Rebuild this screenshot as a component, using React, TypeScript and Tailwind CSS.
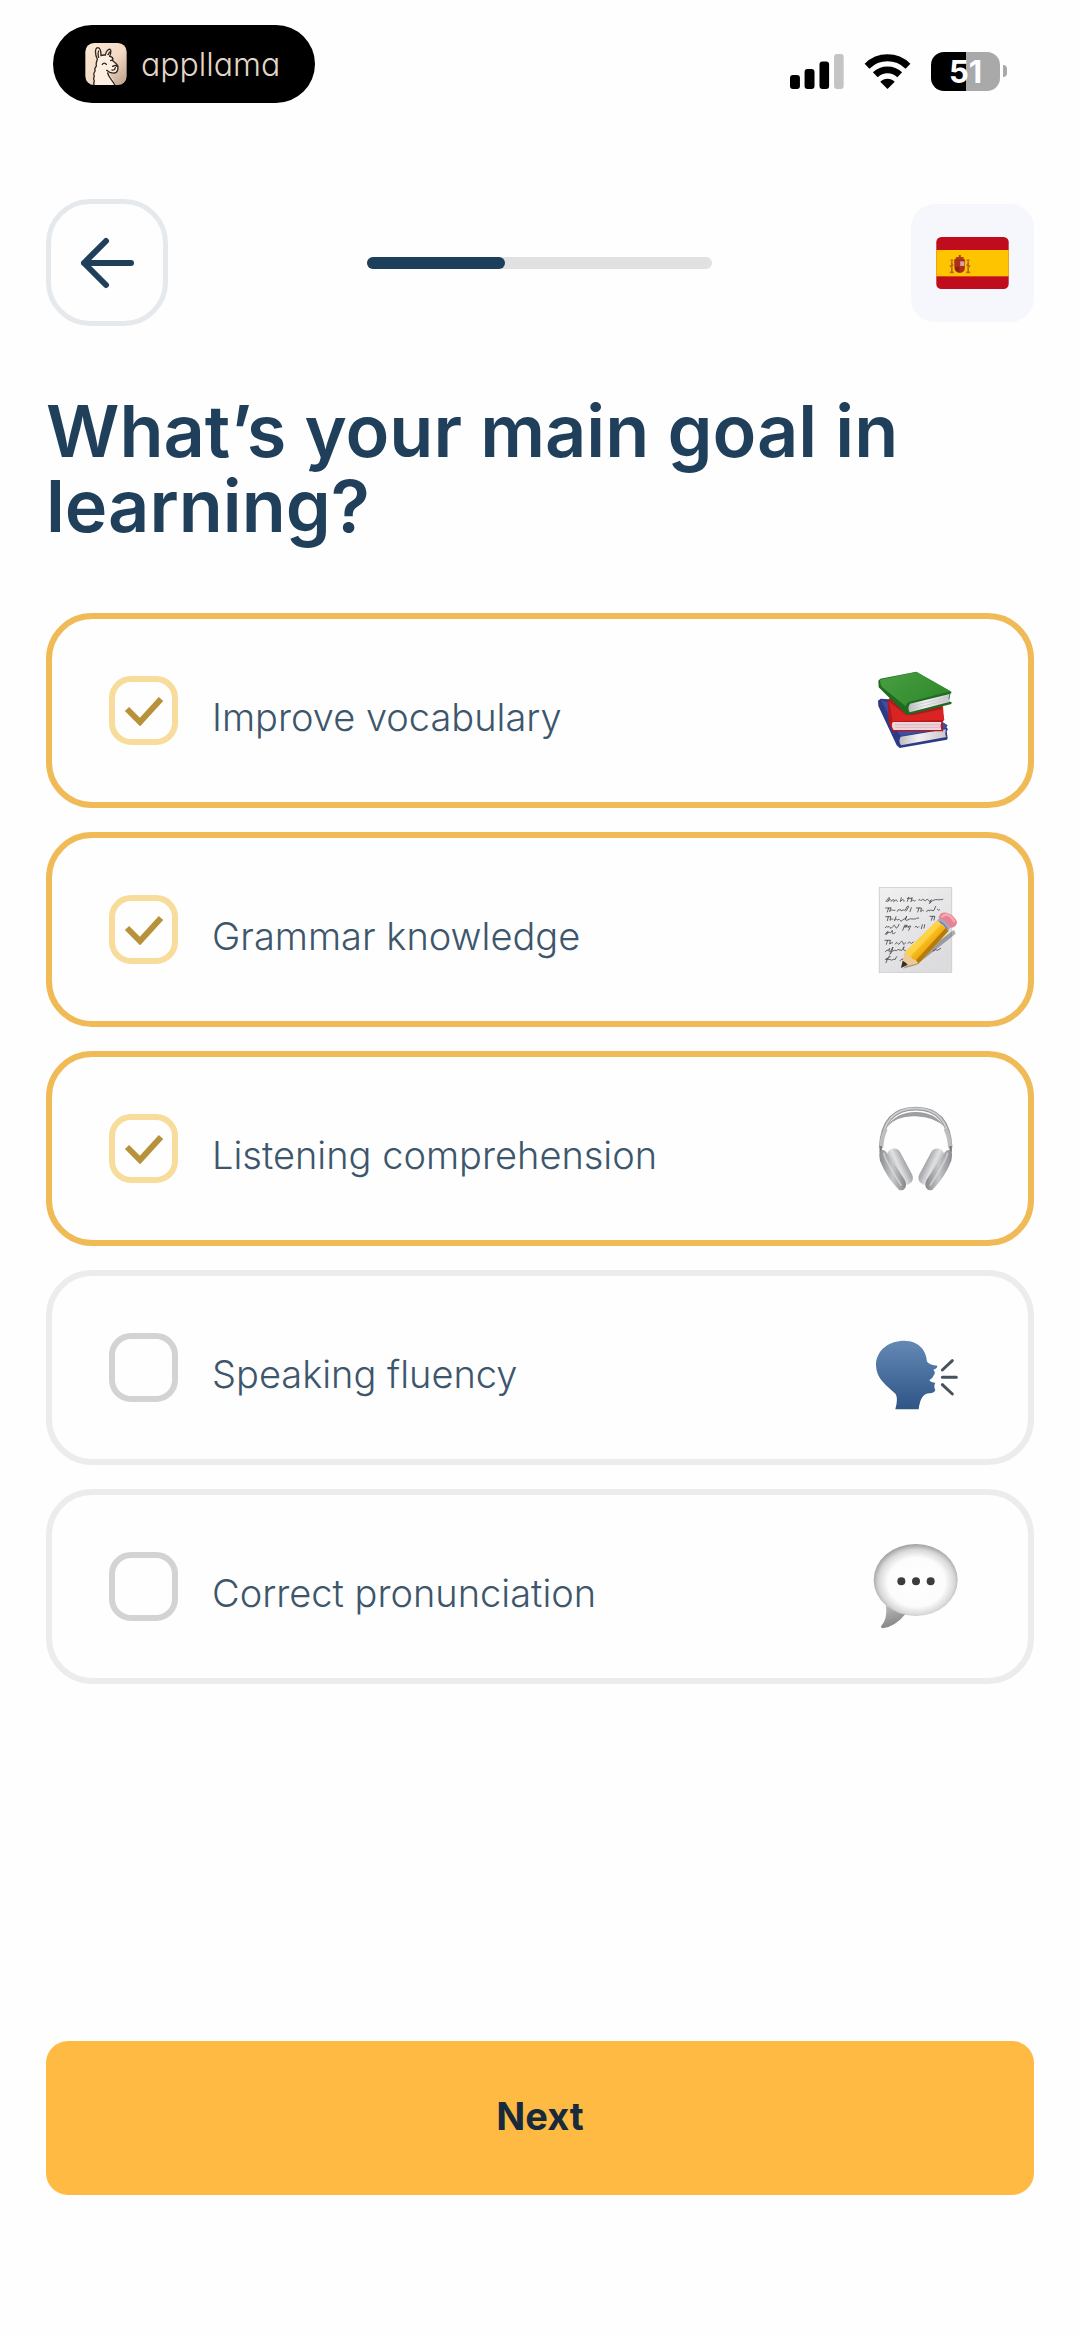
import { useState } from "react";
import type { ReactNode } from "react";

function LlamaIcon() {
  return (
    <svg viewBox="137 96 124 126" className="size-[42px] shrink-0" aria-hidden="true">
      <defs>
        <linearGradient id="llamaBg" x1="0" y1="0" x2="1" y2="1">
          <stop offset="0" stopColor="#fbe9d8" />
          <stop offset="0.55" stopColor="#f3d9c3" />
          <stop offset="1" stopColor="#b99e8a" />
        </linearGradient>
      </defs>
      <rect x="137" y="96" width="124" height="126" rx="26" fill="url(#llamaBg)" />
      <path
        d="M163 222c-3-6 3-8 0-14c-4-6 3-9 0-15c-3-7 5-9 3-15c-3-7 6-9 4-15c-2-8 3-13 3-18c-7-12-8-32 1-34c10 0 10 14 10 24c5-3 9-2 13-2c2-10 9-19 14-17c5 4 1 16-1 21c8 1 11 6 8 12c6 6 17 12 17 20c0 9-2 17-10 18c-7 1-12-1-17-5c2 14 18 25 17 40z"
        fill="#fdf0e3"
      />
      <path
        d="M163 221c-3-6 3-8 0-14c-4-6 3-9 0-15c-3-7 5-9 3-15c-3-7 6-9 4-15c-2-8 3-13 3-18c-7-12-8-32 1-34c10 0 10 14 10 24c5-3 9-2 13-2c2-10 9-19 14-17c5 4 1 16-1 21c8 1 11 6 8 12c6 6 17 12 17 20c0 9-2 17-10 18c-9 1-18-2-24-8M204 186c3 14 15 22 21 35M177 139c-2-8-2-16 0-19M205 131l5-8M188 160c3-5 9-5 12 0M219 166c5-3 11-3 14 1M227 170c-1 6-5 8-10 7M213 149c3-1 6-3 7-6"
        fill="none"
        stroke="#33241c"
        strokeWidth="4"
        strokeLinecap="round"
        strokeLinejoin="round"
      />
    </svg>
  );
}

function SignalIcon() {
  return (
    <svg viewBox="58 72 163 105" className="h-[35px] w-[54px]" aria-label="Signal">
      <rect x="58" y="135" width="30" height="42" rx="9" />
      <rect x="102" y="117" width="30" height="60" rx="9" />
      <rect x="147" y="94" width="29" height="83" rx="9" />
      <rect x="191" y="72" width="29" height="105" rx="9" fill="#c4c4c4" />
    </svg>
  );
}

function WifiIcon() {
  return (
    <svg viewBox="280 71 142 106" className="h-[35px] w-[47px]" aria-label="Wi-Fi">
      <path d="M351 177l-22-22c12-12 32-12 44 0z" />
      <path d="M289 108c35-34 89-34 124 0M314 134c21-20 53-20 74 0" fill="none" stroke="#000" strokeWidth="21" />
    </svg>
  );
}

function SpainFlag() {
  return (
    <svg viewBox="166 168 218 156" className="h-[52px] w-[73px]" aria-hidden="true">
      <defs>
        <clipPath id="flagClip">
          <rect x="166" y="168" width="218" height="156" rx="16" />
        </clipPath>
      </defs>
      <g clipPath="url(#flagClip)">
        <rect x="166" y="168" width="218" height="156" fill="#c00d1e" />
        <rect x="166" y="207" width="218" height="79" fill="#ffc400" />
      </g>
      <path d="M220 236q16-16 33 0l-1 26q-1 13-15 14q-15-1-16-14z" fill="#ad2f16" />
      <path d="M238 241h13v14h-13z" fill="#d9a0a0" />
      <path d="M223 257h13v15q-11-1-13-9z" fill="#8d1f1a" />
      <path d="M225 228h24l-3 6h-18zM234 222h6v7h-6z" fill="#a8401a" />
      <path
        d="M213 242v30M262 242v30M207 274h12M256 274h12M207 256l11-5M268 256l-11-5M209 238h8M258 238h8"
        stroke="#b56a1c"
        strokeWidth="5"
        fill="none"
      />
    </svg>
  );
}

function BooksIcon() {
  return (
    <svg viewBox="69 82 258 258" className="size-[86px]" aria-hidden="true">
      <defs>
        <linearGradient id="bookGreen" x1="0" y1="0" x2="1" y2="0.6">
          <stop offset="0" stopColor="#4a9e43" />
          <stop offset="1" stopColor="#2f8a2a" />
        </linearGradient>
        <linearGradient id="bookPages" x1="0" y1="0" x2="1" y2="0">
          <stop offset="0" stopColor="#b9bcc0" />
          <stop offset="0.4" stopColor="#f2f1f2" />
          <stop offset="1" stopColor="#c9c7cb" />
        </linearGradient>
      </defs>
      <path d="M84 180l8-6l60 4l131 74l11 14l-4 6l3 20l-2 5l-142 25l-9-8L85 196z" fill="#2d3a85" />
      <path d="M93 178l50 96l10 12l135-24l5-8l-30-20z" fill="#3f4f9f" />
      <path d="M152 288l136-22q-5 13 1 23l-136 25q-9-12-1-26z" fill="url(#bookPages)" />
      <path d="M113 180l8-10l155 32l7 35l-5 6v24l3 5H127l-11-25z" fill="#b5191d" />
      <path d="M118 184l160-2l4 56l-154 4z" fill="#da2423" />
      <path d="M128 244h146q-5 12 0 24H131q-9-12-3-24z" fill="#efd5da" />
      <path d="M135 252h134M136 260h134" stroke="#d0a9b2" strokeWidth="2" />
      <path d="M118 184l50 38l20 2l90-19l-5-10z" fill="#8d1513" opacity="0.6" />
      <path d="M85 120l6-6l108-21l106 61l-4 6l-4 22l8 3l-1 5l-128 32l-9-2L86 140z" fill="#1f6b22" />
      <path d="M90 117l109-23l103 58l-123 31q-7 1-12 14L95 138q-5-10-5-21z" fill="url(#bookGreen)" />
      <path d="M180 189l119-29q-6 12-1 24l-119 31q-8-12 1-26z" fill="url(#bookPages)" />
      <path d="M182 197l112-28M181 206l113-29" stroke="#bcbfc2" strokeWidth="2" />
    </svg>
  );
}

function MemoIcon() {
  return (
    <svg viewBox="69 80 258 258" className="size-[86px]" aria-hidden="true">
      <defs>
        <linearGradient id="memoPaper" x1="0" y1="0" x2="0.6" y2="1">
          <stop offset="0" stopColor="#f1f1f2" />
          <stop offset="1" stopColor="#dcdcde" />
        </linearGradient>
        <linearGradient id="pencilBody" x1="0" y1="0" x2="1" y2="1">
          <stop offset="0.25" stopColor="#ffd54a" />
          <stop offset="0.5" stopColor="#f7b818" />
          <stop offset="0.8" stopColor="#c27f0a" />
        </linearGradient>
      </defs>
      <rect x="88" y="81" width="217" height="256" fill="url(#memoPaper)" stroke="#cfcfd2" strokeWidth="3" />
      <g fill="none" stroke="#4c4c50" strokeWidth="2.6" strokeLinecap="round" strokeLinejoin="round">
        <path d="M108 124q8-14 10-12t-5 12q5-8 8-6t3 5q4-7 7-5t0 6q5-6 8-5t3 4M154 112l-3 12q6-8 9-6t2 5M176 111l-4 12M172 114h14M186 112l-3 12q5-8 7-4t6 1M206 119q5-4 7 2q5-7 9-2t8-1q4-3 6 3t8-3l-6 12q10-12 18-12t8 0t8 0t8-1" />
        <path d="M107 143h16M116 143l-4 12M122 143l-3 11q6-8 9-5t7 1M142 153q3-9 6-4q5-4 6 3q6-5 8-3t4 0q6-14 9-12t-7 15M184 142l-4 12M199 143h14M207 143l-4 12M214 144l-2 10q6-8 9-3M230 154q4-10 7-2q6-5 9-2t6 0q3-8 5-12M262 147q4 5 7 2" />
        <path d="M107 169h15M115 169l-3 12M122 170l-2 10q6-7 9-4M138 169l-5 12q7-8 9-2q6-5 8 1t8-1t8-1l4-11q-8 17 3 12t9-4t8 1t8-1t8-2M240 168h14M248 168l-4 12M254 169l-2 10" />
        <path d="M106 202q4-8 7-2q5-4 7 2t8-3t8 0t8 0l3-7M158 210l6-15q7-3 7 2t-8 3q7-5 11-3t0 5q4-7 8-5l-6 13M195 200q4-5 6 0t6-1M217 193l-3 12M224 193l-2 10" />
        <path d="M106 222q5-10 8-8t-5 8q6-9 9-6t6-1l3-5q-2 12 3 10t6-3" />
        <path d="M105 240h16M113 240l-4 12M121 241l-2 10q6-6 9-4M136 251q4-9 7-2t8-2t8 1t7-1M174 249q5-8 7-2t9-2" />
        <path d="M106 274q6-8 9-4l4-6q-5 12 2 10l8-14q-6 22-10 22q7-14 15-12t8-1t8 0t8-2l4-8q-4 14 4 12M250 272q8-8 12-2l10-6" />
        <path d="M108 307q8-22 12-20t-14 10h14q4 5 8 1t6 1l6-10M150 301q8-10 10-2" />
      </g>
      <path d="M158 325l154-117l5 12l-118 94z" fill="#000" opacity="0.3" />
      <path d="M154 321l11-46L262 180l34 31l-92 100z" fill="url(#pencilBody)" />
      <path d="M165 276l97-95l12 11l-97 101z" fill="#ffda55" opacity="0.7" />
      <path d="M204 311l92-100l-9-8l-93 101z" fill="#b87908" />
      <path d="M154 321l11-46q8-1 9 12q11-1 13 10q12-1 17 12z" fill="#ecc99a" />
      <path d="M153 323l5-22q9 4 15 12z" fill="#303034" />
      <path d="M261 181l9-10q20 7 32 29l-8 12q-10-22-33-31z" fill="#a7a6c1" />
      <path d="M269 184q15 8 23 22" fill="none" stroke="#77779b" strokeWidth="4" />
      <path d="M266 172q4-18 23-15q24 6 32 28q0 15-19 18q-11-22-36-31z" fill="#e98292" />
      <path d="M276 169q9-10 22-3q10 7 14 17" fill="none" stroke="#f6a9b2" strokeWidth="7" strokeLinecap="round" />
    </svg>
  );
}

function HeadphonesIcon() {
  return (
    <svg viewBox="69 76 258 258" className="size-[86px]" aria-hidden="true">
      <defs>
        <linearGradient id="cupSide" x1="0" y1="0" x2="1" y2="0">
          <stop offset="0" stopColor="#8b8c8f" />
          <stop offset="0.5" stopColor="#c6c7c9" />
          <stop offset="1" stopColor="#85868a" />
        </linearGradient>
        <linearGradient id="cupPad" x1="0" y1="0" x2="1" y2="0.2">
          <stop offset="0" stopColor="#b3b4b6" />
          <stop offset="0.5" stopColor="#e1e1e3" />
          <stop offset="1" stopColor="#a9aaad" />
        </linearGradient>
      </defs>
      <path d="M92 201C96 124 130 84 197 84S298 124 302 201" fill="none" stroke="#97989b" strokeWidth="11" />
      <path d="M93 198C98 124 132 83 197 83S296 124 301 198" fill="none" stroke="#cfd0d2" strokeWidth="5" />
      <path d="M110 140q28-46 87-46t87 46q-28-31-87-33t-87 33z" fill="#9d9ea1" />
      <path d="M94 198q2-29 12-50M300 198q-2-29-12-50" fill="none" stroke="#bdbec0" strokeWidth="12" strokeLinecap="round" />
      <path d="M92 196v18M302 196v18" stroke="#77787b" strokeWidth="7" />
      <g>
        <rect x="-21" y="-59" width="42" height="118" rx="21" transform="translate(150 258) rotate(-28)" fill="url(#cupPad)" />
        <path d="M90 211q10-7 19 3l54 82q8 15 3 25q-7 11-19 7q-38-39-57-88q-4-22 0-29z" fill="url(#cupSide)" />
        <path d="M101 216q2 20 53 99" fill="none" stroke="#dcdddf" strokeWidth="5" opacity="0.7" />
      </g>
      <g transform="matrix(-1 0 0 1 394 0)">
        <rect x="-21" y="-59" width="42" height="118" rx="21" transform="translate(150 258) rotate(-28)" fill="url(#cupPad)" />
        <path d="M90 211q10-7 19 3l54 82q8 15 3 25q-7 11-19 7q-38-39-57-88q-4-22 0-29z" fill="url(#cupSide)" />
        <path d="M101 216q2 20 53 99" fill="none" stroke="#dcdddf" strokeWidth="5" opacity="0.7" />
      </g>
    </svg>
  );
}

function SpeakingIcon() {
  return (
    <svg viewBox="69 44 258 258" className="size-[86px]" aria-hidden="true">
      <defs>
        <linearGradient id="headBlue" x1="0" y1="0" x2="0" y2="1">
          <stop offset="0" stopColor="#6589b4" />
          <stop offset="0.5" stopColor="#486f9e" />
          <stop offset="1" stopColor="#2f5486" />
        </linearGradient>
      </defs>
      <path
        d="M136 297q9-31 1-46C112 226 78 208 78 162C80 117 119 91 163 91C207 92 229 120 231 154Q240 164 262 166Q263 173 250 178Q257 186 253 192Q249 203 238 210Q243 217 256 217Q250 228 256 240Q252 249 239 249Q212 248 206 297z"
        fill="url(#headBlue)"
      />
      <path d="M277 179l30-28M277 201h42M277 223l30 28" stroke="#46525e" strokeWidth="9" strokeLinecap="round" />
    </svg>
  );
}

function BubbleIcon() {
  return (
    <svg viewBox="69 130 258 258" className="size-[86px]" aria-hidden="true">
      <defs>
        <radialGradient id="bubbleFill" cx="0.51" cy="0.53" r="0.55">
          <stop offset="0" stopColor="#ffffff" />
          <stop offset="0.62" stopColor="#fcfcfc" />
          <stop offset="0.82" stopColor="#d9d9d9" />
          <stop offset="1" stopColor="#8e8e8e" />
        </radialGradient>
        <linearGradient id="bubbleTail" x1="0" y1="0" x2="0.3" y2="1">
          <stop offset="0" stopColor="#bdbdbd" />
          <stop offset="1" stopColor="#858585" />
        </linearGradient>
      </defs>
      <path d="M108 315q5 40-15 62q-1 6 6 6q36-5 67-42z" fill="url(#bubbleTail)" />
      <ellipse cx="197" cy="238" rx="126" ry="108" fill="url(#bubbleFill)" />
      <g fill="#3c3c3c">
        <circle cx="154" cy="242" r="12" />
        <circle cx="198" cy="242" r="12" />
        <circle cx="242" cy="242" r="12" />
      </g>
    </svg>
  );
}

type Goal = { id: string; label: string; icon: ReactNode };

const goals: Goal[] = [
  { id: "vocabulary", label: "Improve vocabulary", icon: <BooksIcon /> },
  { id: "grammar", label: "Grammar knowledge", icon: <MemoIcon /> },
  { id: "listening", label: "Listening comprehension", icon: <HeadphonesIcon /> },
  { id: "speaking", label: "Speaking fluency", icon: <SpeakingIcon /> },
  { id: "pronunciation", label: "Correct pronunciation", icon: <BubbleIcon /> },
];

function GoalOption({ goal, checked, onToggle }: { goal: Goal; checked: boolean; onToggle: () => void }) {
  return (
    <label
      htmlFor={goal.id}
      className="flex h-[195px] cursor-pointer items-center rounded-[46px] border-6 border-[#ebecee] pr-[69px] pl-[57px] has-checked:border-[#f0bb57]"
    >
      <span className="relative flex size-[69px] shrink-0 items-center justify-center">
        <input
          id={goal.id}
          type="checkbox"
          checked={checked}
          onChange={onToggle}
          className="peer size-full appearance-none rounded-[22px] border-6 border-[#d3d3d3] checked:border-[#f8dc9c]"
        />
        <svg
          viewBox="0 0 40 30"
          className="pointer-events-none absolute h-[30px] w-[40px] opacity-0 peer-checked:opacity-100"
          aria-hidden="true"
        >
          <path d="M3 13l13 13L37 3" fill="none" stroke="#b8923a" strokeWidth="6" />
        </svg>
      </span>
      <span className="flex-1 pt-3 pl-[34px] text-[38px] leading-[48px] font-light text-[#3d566b]">{goal.label}</span>
      {goal.icon}
    </label>
  );
}

export default function App() {
  const [selected, setSelected] = useState<string[]>(["vocabulary", "grammar", "listening"]);
  const toggle = (id: string) =>
    setSelected((prev) => (prev.includes(id) ? prev.filter((g) => g !== id) : [...prev, id]));

  return (
    <div className="flex min-h-screen flex-col bg-[#fefefe] font-['Inter','Open_Sans',sans-serif] text-[#1f3f5b]">
      <header className="flex items-center justify-between pt-[25px] pr-[73px] pl-[53px]">
        <div className="flex h-[78px] w-[262px] items-center rounded-full bg-black pl-8">
          <LlamaIcon />
          <span className="pt-0.5 pl-[14px] text-[32px] leading-[36px] font-light text-[#e2d6c8] [font-feature-settings:'cv11']">
            appllama
          </span>
        </div>
        <div className="flex items-center gap-5 pt-[14px]">
          <SignalIcon />
          <WifiIcon />
          <div className="flex items-center gap-[3px]">
            <div className="flex h-[39px] w-[69px] items-center justify-center rounded-[13px] bg-linear-to-r from-black from-51% to-[#a9a9a9] to-51% text-[31px] leading-[39px] font-bold text-white">
              51
            </div>
            <div className="h-[12px] w-[4px] rounded-r-full bg-[#a9a9a9]" />
          </div>
        </div>
      </header>

      <main className="flex flex-1 flex-col px-[46px] pt-[96px] pb-[141px]">
        <div className="flex items-center justify-between">
          <button
            type="button"
            aria-label="Back"
            className="flex h-[127px] w-[122px] items-center justify-center rounded-[44px] border-5 border-[#e6e9ec]"
          >
            <svg viewBox="0 0 54 52" className="h-[52px] w-[54px]" aria-hidden="true">
              <path
                d="M51 26H4M26 4L4 26l22 22"
                fill="none"
                stroke="#1f3f5b"
                strokeWidth="6"
                strokeLinecap="round"
                strokeLinejoin="round"
              />
            </svg>
          </button>
          <div
            role="progressbar"
            aria-label="Onboarding progress"
            aria-valuenow={40}
            aria-valuemin={0}
            aria-valuemax={100}
            className="h-3 w-[345px] rounded-full bg-[#e1e1e1]"
          >
            <div className="h-full w-2/5 rounded-full bg-[#1c3f5c]" />
          </div>
          <button
            type="button"
            aria-label="Spanish"
            className="flex h-[118px] w-[123px] items-center justify-center rounded-[24px] bg-[#f5f7fc]"
          >
            <SpainFlag />
          </button>
        </div>

        <h1 className="pt-[67px] text-[72px] leading-[75px] font-semibold">What’s your main goal in learning?</h1>

        <div className="flex flex-col gap-6 pt-[70px]">
          {goals.map((goal) => (
            <GoalOption
              key={goal.id}
              goal={goal}
              checked={selected.includes(goal.id)}
              onToggle={() => toggle(goal.id)}
            />
          ))}
        </div>

        <button
          type="button"
          className="mt-auto h-[154px] rounded-[22px] bg-[#ffba43] pb-1 text-[38px] leading-[48px] font-bold text-[#172b3c]"
        >
          Next
        </button>
      </main>
    </div>
  );
}
